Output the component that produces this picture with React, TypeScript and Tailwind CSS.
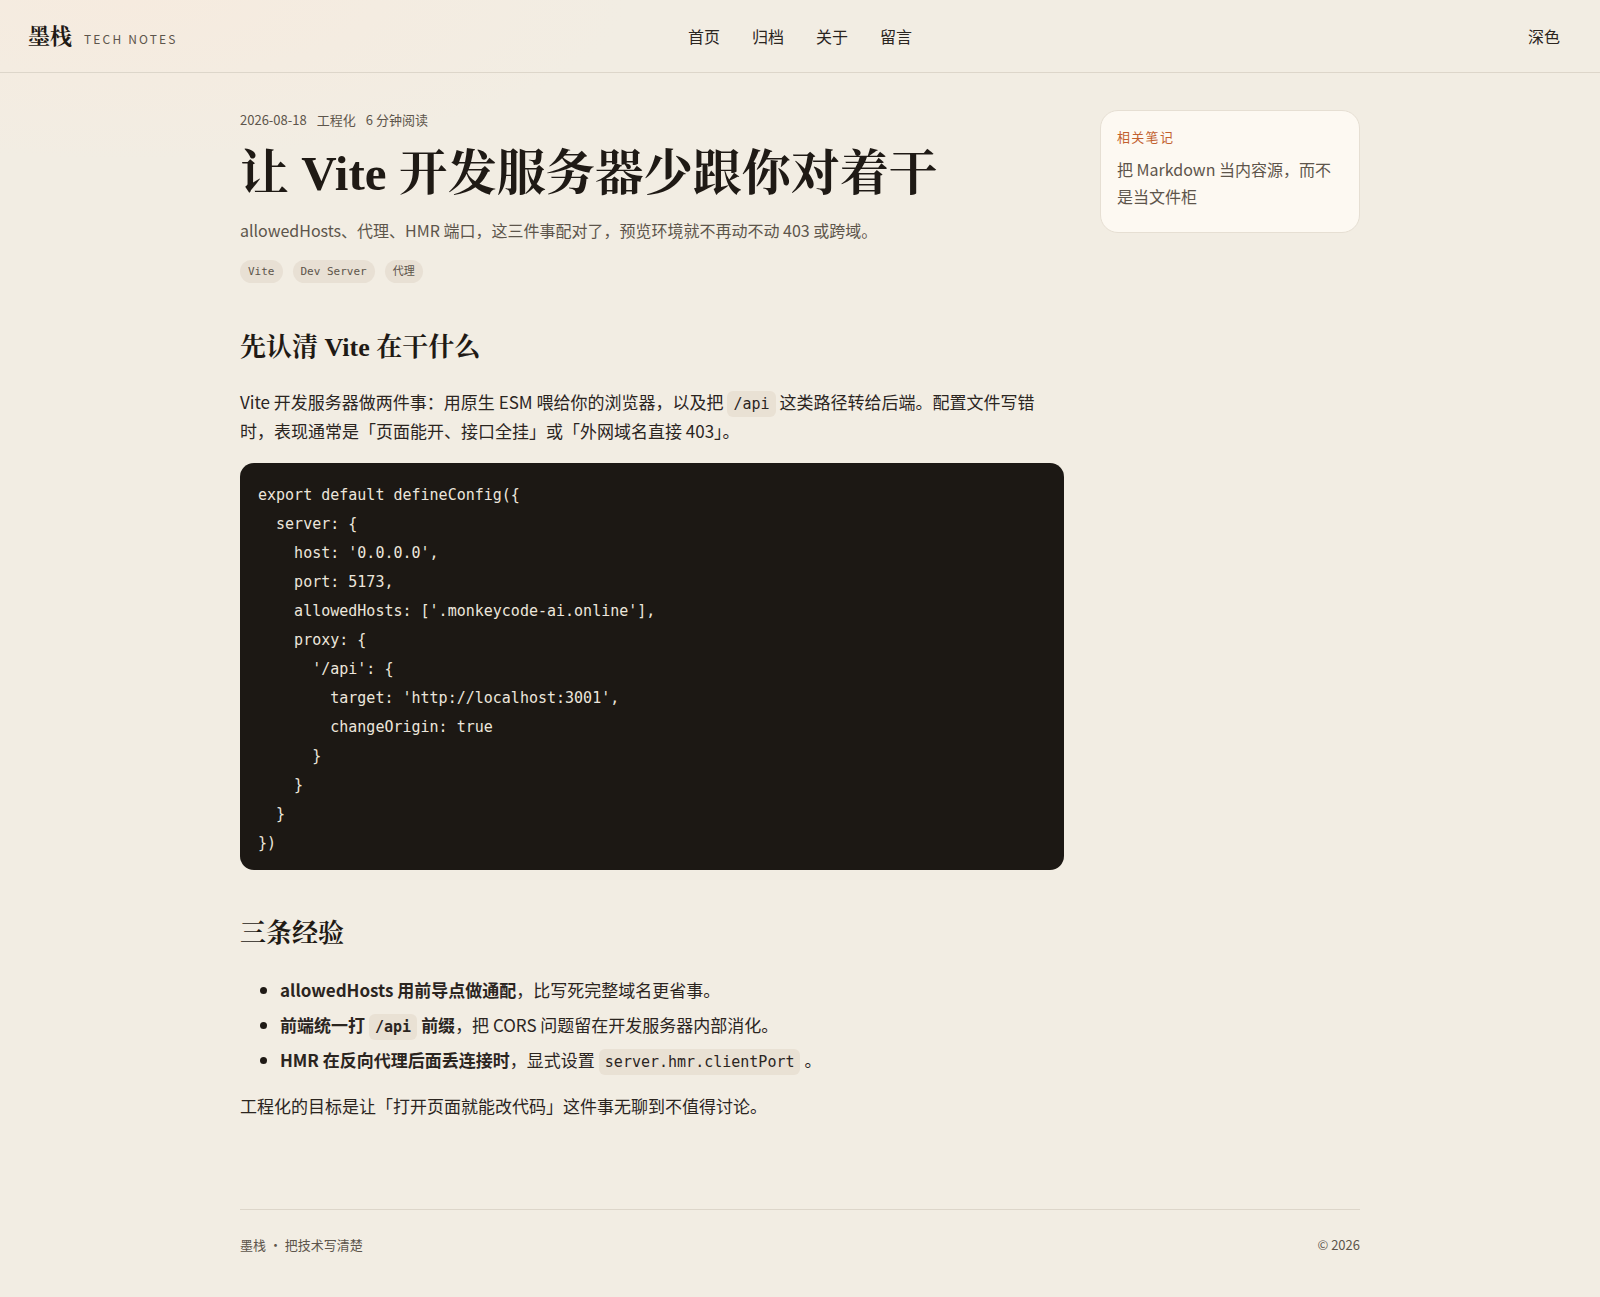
import React from "react";

const sans = "font-['Noto_Sans_CJK_SC','Noto_Sans',sans-serif]";
const serif = "font-['Liberation_Serif','Noto_Serif_CJK_SC','Noto_Sans_CJK_SC',serif]";
const mono = "font-['DejaVu_Sans_Mono','Liberation_Mono','Noto_Sans_CJK_SC',monospace]";

const codeLines = [
  "export default defineConfig({",
  "  server: {",
  "    host: '0.0.0.0',",
  "    port: 5173,",
  "    allowedHosts: ['.monkeycode-ai.online'],",
  "    proxy: {",
  "      '/api': {",
  "        target: 'http://localhost:3001',",
  "        changeOrigin: true",
  "      }",
  "    }",
  "  }",
  "})",
];

function InlineCode({ children, bold }: { children: React.ReactNode; bold?: boolean }) {
  return (
    <code
      className={`${mono} ${bold ? "font-bold" : ""} text-[15px] leading-none bg-[#e9e1d4] rounded-md px-1.5 py-[4px] mx-1`}
    >
      {children}
    </code>
  );
}

function Header() {
  return (
    <header className="h-[73px] border-b border-[#ddd6ca] px-7 flex items-center">
      <div className="flex-1 flex items-baseline gap-3">
        <span className={`${serif} text-[22px] font-bold text-[#1f1a15]`}>墨栈</span>
        <span className={`${sans} text-[12px] tracking-[0.18em] text-[#5d554b]`}>TECH NOTES</span>
      </div>
      <nav className={`${sans} flex gap-8 text-[16px] text-[#2b251f]`}>
        <a>首页</a>
        <a>归档</a>
        <a>关于</a>
        <a>留言</a>
      </nav>
      <div className="flex-1 flex justify-end">
        <button className={`${sans} text-[16px] text-[#2b251f] px-3 py-1`}>深色</button>
      </div>
    </header>
  );
}

function Article() {
  return (
    <article className={`${sans} text-[#2b251f] flex flex-col`}>
      <div className="flex gap-2.5 text-[13px] leading-5 text-[#5d554b]">
        <span>2026-08-18</span>
        <span>工程化</span>
        <span>6 分钟阅读</span>
      </div>
      <h1 className={`${serif} mt-[14px] text-[49px] leading-[60px] font-bold text-[#1f1a15]`}>
        让 Vite 开发服务器少跟你对着干
      </h1>
      <p className="mt-3 text-[16px] leading-[29px] text-[#5d554b]">
        allowedHosts、代理、HMR 端口，这三件事配对了，预览环境就不再动不动 403 或跨域。
      </p>
      <div className="mt-[15px] flex gap-2.5">
        {["Vite", "Dev Server", "代理"].map((t) => (
          <span
            key={t}
            className={`${mono} text-[11px] leading-[23px] h-[23px] px-2 rounded-full bg-[#e8e0d4] text-[#5d554b]`}
          >
            {t}
          </span>
        ))}
      </div>

      <h2 className={`${serif} mt-[47px] text-[26px] leading-9 font-bold text-[#1f1a15]`}>
        先认清 Vite 在干什么
      </h2>
      <p className="mt-[21px] text-[17px] leading-[29px]">
        Vite 开发服务器做两件事：用原生 ESM 喂给你的浏览器，以及把<InlineCode>/api</InlineCode>这类路径转给后端。配置文件写错时，表现通常是「页面能开、接口全挂」或「外网域名直接 403」。
      </p>
      <pre
        className={`${mono} mt-[18px] bg-[#1c1814] text-[#ece6dc] rounded-[14px] pt-[18px] pb-[12px] px-[18px] text-[15px] leading-[29px]`}
      >
        {codeLines.join("\n")}
      </pre>

      <h2 className={`${serif} mt-[46px] text-[26px] leading-9 font-bold text-[#1f1a15]`}>三条经验</h2>
      <ul className="mt-[23px] pl-10 list-disc flex flex-col gap-[6px] text-[17px] leading-[29px] marker:text-[#1f1a15]">
        <li>
          <strong className="font-bold">allowedHosts 用前导点做通配</strong>，比写死完整域名更省事。
        </li>
        <li>
          <strong className="font-bold">
            前端统一打<InlineCode bold>/api</InlineCode>前缀
          </strong>
          ，把 CORS 问题留在开发服务器内部消化。
        </li>
        <li>
          <strong className="font-bold">HMR 在反向代理后面丢连接时</strong>，显式设置
          <InlineCode>server.hmr.clientPort</InlineCode>。
        </li>
      </ul>
      <p className="mt-[17px] text-[17px] leading-[29px]">
        工程化的目标是让「打开页面就能改代码」这件事无聊到不值得讨论。
      </p>
    </article>
  );
}

function Sidebar() {
  return (
    <aside>
      <div className={`${sans} rounded-[18px] border border-[#e6dfd3] bg-[#fdf9f2] px-4 pt-4 pb-[22px]`}>
        <div className="text-[13px] leading-5 tracking-[0.1em] text-[#c2612f]">相关笔记</div>
        <div className="mt-[9px] text-[16px] leading-[27px] text-[#5d554b]">
          把 Markdown 当内容源，而不是当文件柜
        </div>
      </div>
    </aside>
  );
}

export default function App() {
  return (
    <div className="min-h-[1297px] bg-[#f2ede3] bg-[radial-gradient(ellipse_500px_160px_at_8%_0%,#f6ebdf,transparent)]">
      <Header />
      <div className="max-w-[1120px] mx-auto pt-[37px]">
        <div className="grid grid-cols-[824px_260px] gap-9 items-start">
          <Article />
          <Sidebar />
        </div>
        <footer
          className={`${sans} mt-[89px] border-t border-[#ddd6ca] pt-[25px] pb-[42px] flex justify-between text-[13px] leading-5 text-[#5d554b]`}
        >
          <span>墨栈 · 把技术写清楚</span>
          <span>© 2026</span>
        </footer>
      </div>
    </div>
  );
}
